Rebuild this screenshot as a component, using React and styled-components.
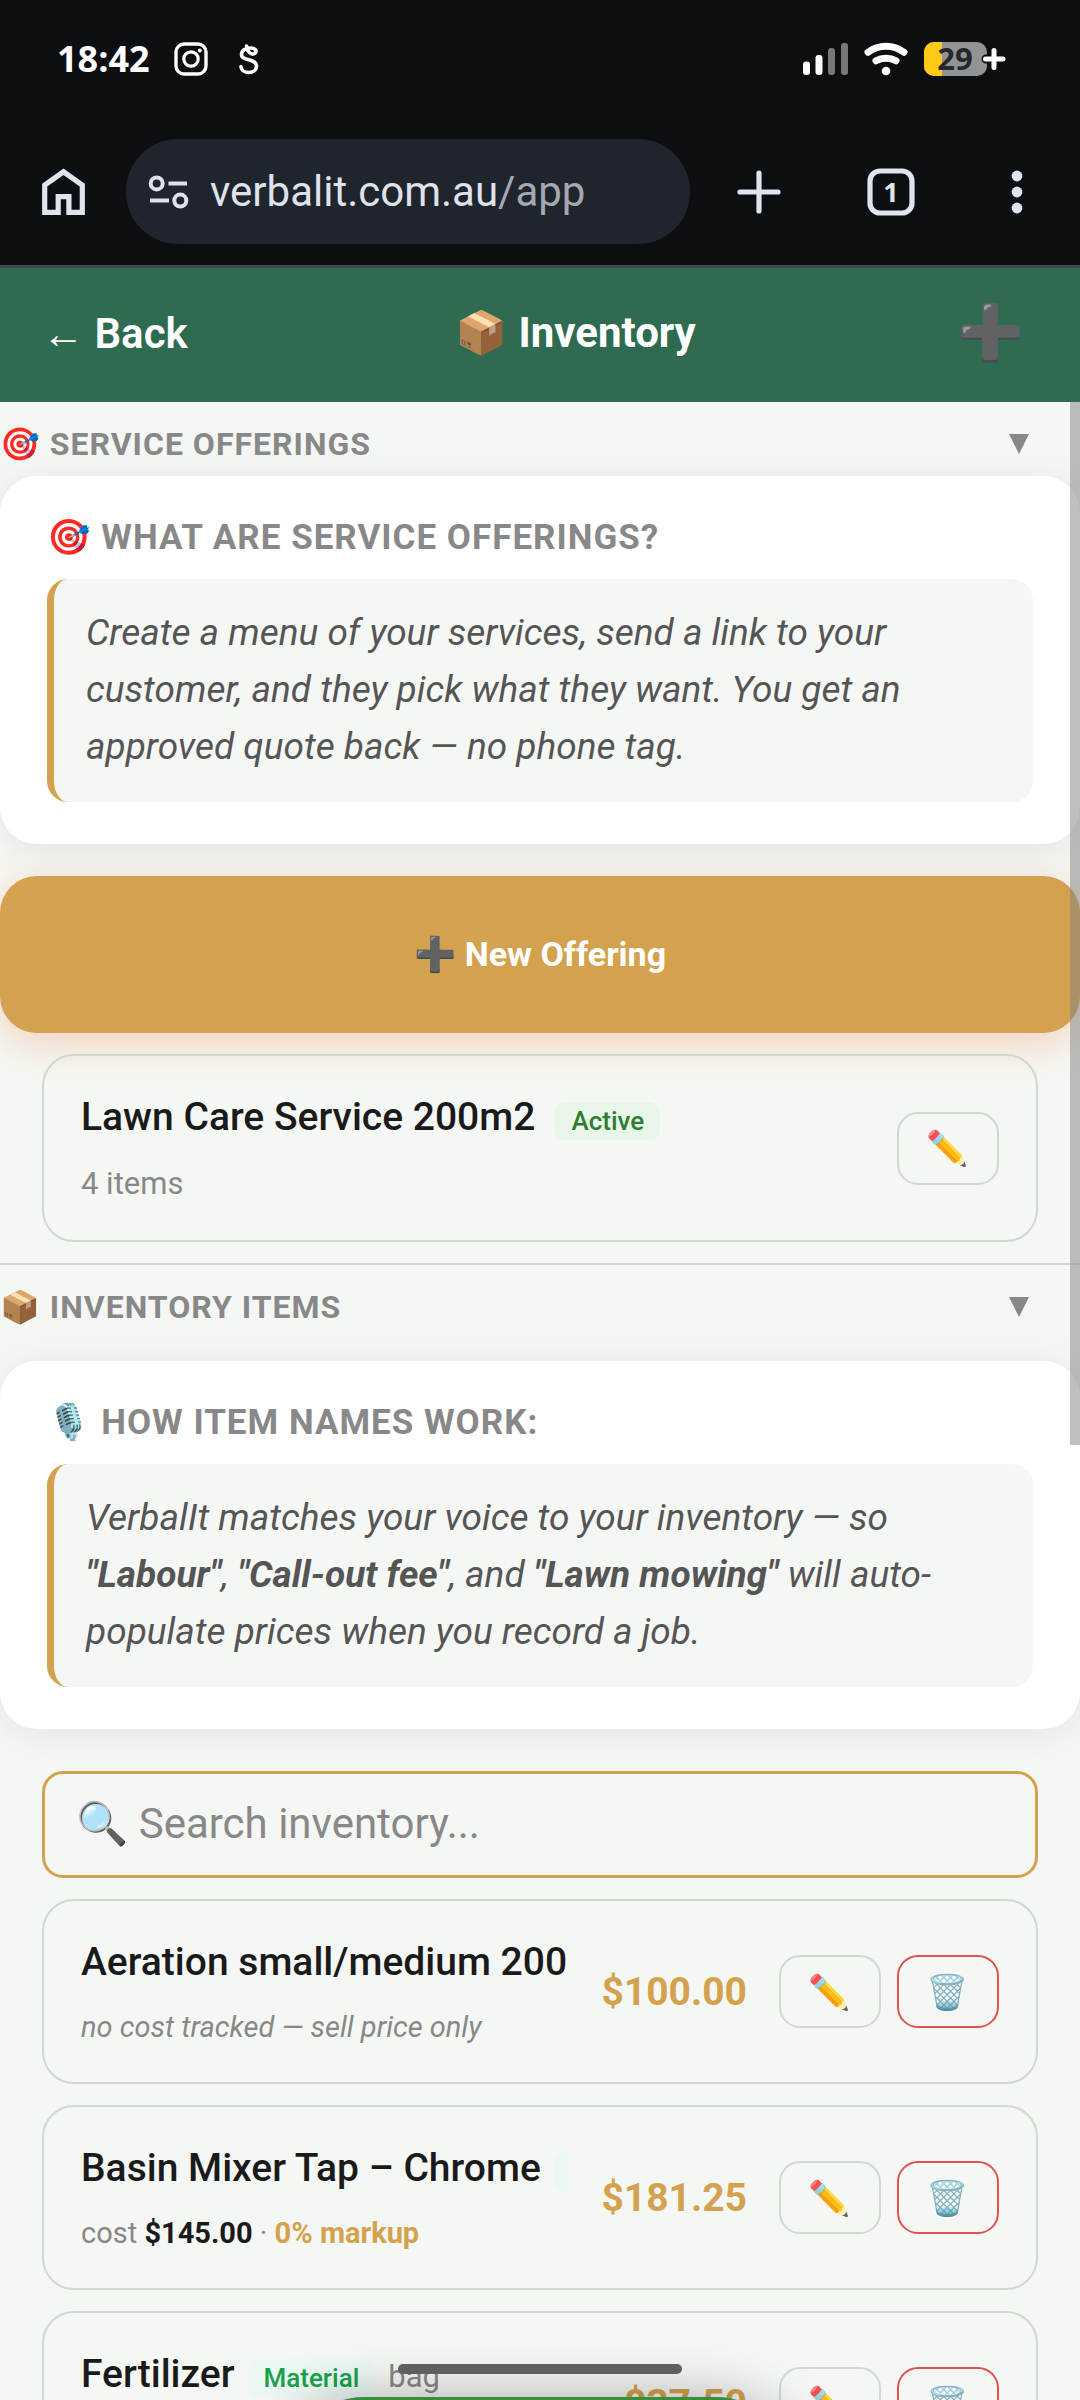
import { useState } from "react";
import styled, { createGlobalStyle, css } from "styled-components";

const GlobalStyle = createGlobalStyle`
  *, *::before, *::after {
    box-sizing: border-box;
  }
  body {
    margin: 0;
    background: #f5f7f4;
    font-family: Roboto, "Noto Color Emoji", sans-serif;
    color: #1a1a1a;
  }
  button, input {
    font-family: inherit;
  }
  button {
    cursor: pointer;
    padding: 0;
    border: 0;
    background: none;
    color: inherit;
  }
`;

const Screen = styled.div`
  position: relative;
  display: flex;
  flex-direction: column;
  height: 100vh;
  overflow: hidden;
`;

/* ---------- phone chrome ---------- */

const StatusBar = styled.div`
  display: flex;
  align-items: center;
  justify-content: space-between;
  height: 118px;
  padding: 0 74px 0 57px;
  background: #0c0e12;
  flex-shrink: 0;
`;

const StatusGroup = styled.div`
  display: flex;
  align-items: center;
  gap: ${(props) => props.$gap}px;
`;

const Clock = styled.span`
  color: #fff;
  font-family: "Open Sans", sans-serif;
  font-size: 36px;
  font-weight: 700;
  line-height: 40px;
`;

const BrowserBar = styled.div`
  display: flex;
  align-items: center;
  height: 150px;
  padding: 0 47px 0 40px;
  background: #0c0e12;
  border-bottom: 3px solid #45474d;
  flex-shrink: 0;
`;

const BrowserButton = styled.button`
  display: flex;
  align-items: center;
  justify-content: center;
  min-width: 32px;
  height: 48px;
  color: #dfe5ee;
`;

const AddressBar = styled.div`
  display: flex;
  align-items: center;
  flex: 1;
  gap: 21px;
  height: 105px;
  margin: 0 47px 0 38px;
  padding: 0 22px;
  border-radius: 52px;
  background: #20242c;
  color: #dfe2eb;
`;

const Url = styled.a`
  color: #dfe2eb;
  font-size: 42px;
  line-height: 50px;
  text-decoration: none;
  white-space: nowrap;
  span {
    color: #a5a8b1;
  }
`;

const BrowserActions = styled.div`
  display: flex;
  align-items: center;
  gap: 86px;
`;

/* ---------- app header ---------- */

const Header = styled.header`
  display: flex;
  align-items: center;
  justify-content: space-between;
  height: 134px;
  padding: 0 55px 4px 42px;
  background: #2e6b50;
  color: #fff;
  flex-shrink: 0;
`;

const BackButton = styled.button`
  padding: 2px 6px 0 0;
  color: #fff;
  font-size: 42px;
  font-weight: 600;
  line-height: 48px;
`;

const PageTitle = styled.h1`
  margin: 0;
  font-size: 42px;
  font-weight: 700;
  line-height: 48px;
`;

const AddButton = styled.button`
  font-size: 54px;
  line-height: 60px;
`;

/* ---------- content ---------- */

const Content = styled.main`
  flex: 1;
  min-height: 0;
  overflow-y: auto;
  scrollbar-width: none;
`;

const ScrollThumb = styled.div`
  position: absolute;
  top: 402px;
  right: 0;
  width: 10px;
  height: 1043px;
  background: rgba(128, 128, 128, 0.5);
  pointer-events: none;
`;

const Section = styled.section`
  & + & {
    border-top: 2px solid #cfdacf;
    margin-top: 21px;
  }
`;

const SectionToggle = styled.button`
  display: flex;
  align-items: center;
  justify-content: space-between;
  width: 100%;
  height: 74px;
  padding: 10px 51px 0 0;
  margin-bottom: ${(props) => (props.$spaced ? "22px" : "0")};
  color: #888;
  font-size: 32px;
  font-weight: 700;
  line-height: 37px;
  letter-spacing: 1px;
  text-transform: uppercase;
`;

const Card = styled.div`
  padding: 42px 47px;
  border-radius: 37px;
  background: #fff;
  box-shadow: 0 5px 42px rgba(0, 0, 0, 0.08);
`;

const CardTitle = styled.h2`
  margin: 0 0 21px;
  color: #888;
  font-size: 35px;
  font-weight: 700;
  line-height: 40px;
  letter-spacing: 1px;
  text-transform: uppercase;
`;

const Note = styled.p`
  margin: 0;
  padding: 25px 31px 27px 32px;
  border-left: 7px solid #d4a24e;
  border-radius: 21px;
  background: #f5f7f4;
  color: #555;
  font-size: 37px;
  font-style: italic;
  line-height: 57px;
`;

const NewOfferingButton = styled.button`
  display: block;
  width: 100%;
  height: 157px;
  margin: 32px 0 21px;
  padding-bottom: 2px;
  border-radius: 37px;
  background: #d4a24e;
  color: #fff;
  font-size: 34px;
  font-weight: 700;
  box-shadow: 0 10px 42px rgba(232, 122, 53, 0.3);
`;

const List = styled.ul`
  display: flex;
  flex-direction: column;
  gap: 21px;
  margin: 0;
  padding: 0 42px;
  list-style: none;
`;

const Row = styled.li`
  display: flex;
  align-items: center;
  gap: 32px;
  padding: 35px 37px;
  border: 2px solid #cfdacf;
  border-radius: 32px;
`;

const RowInfo = styled.div`
  flex: 1;
  min-width: 0;
  overflow: hidden;
`;

const RowName = styled.div`
  display: flex;
  align-items: baseline;
  gap: ${(props) => (props.$wide ? "20px" : "13px")};
  height: 52px;
  font-size: 39px;
  font-weight: 500;
  line-height: 52px;
  white-space: nowrap;
`;

const badgeColors = {
  active: css`
    background: #e8f5e9;
    color: #2e7d32;
  `,
  material: css`
    background: #ecf8f3;
    color: #16a34a;
  `,
};

const Badge = styled.span`
  padding: 4px 16px;
  border-radius: 10px;
  font-size: 26px;
  font-weight: 500;
  line-height: 30px;
  ${(props) => badgeColors[props.$kind]}
`;

const Unit = styled.span`
  color: #888;
  font-size: 31px;
  font-weight: 400;
`;

const OfferMeta = styled.div`
  margin-top: 19px;
  color: #888;
  font-size: 31px;
  line-height: 43px;
`;

const ItemMeta = styled.div`
  margin-top: 19px;
  color: #888;
  font-size: 29px;
  font-style: ${(props) => (props.$muted ? "italic" : "normal")};
  line-height: 40px;
  white-space: nowrap;
  strong {
    color: #1a1a1a;
  }
  em {
    color: #d4a24e;
    font-style: normal;
    font-weight: 700;
  }
`;

const Price = styled.span`
  color: #d4a24e;
  font-size: 39px;
  font-weight: 700;
`;

const Actions = styled.div`
  display: flex;
  gap: 16px;
`;

const IconButton = styled.button`
  width: 102px;
  height: 73px;
  border: 2px solid ${(props) => (props.$danger ? "#de5350" : "#cfdacf")};
  border-radius: 21px;
  font-size: 34px;
  line-height: 40px;
`;

const SearchBox = styled.div`
  padding: 42px 42px 21px;
`;

const SearchInput = styled.input`
  display: block;
  width: 100%;
  height: 107px;
  padding: 0 31px 2px;
  border: 3px solid #d4a24e;
  border-radius: 21px;
  background: #f5f7f4;
  color: #1a1a1a;
  font-size: 42px;
  outline: none;
  &::placeholder {
    color: #888;
    opacity: 1;
  }
`;

const RecordButton = styled.button`
  position: absolute;
  bottom: -144px;
  left: 50%;
  width: 500px;
  height: 147px;
  margin-left: -250px;
  border-radius: 74px;
  background: #388e3c;
  box-shadow: 0 10px 63px rgba(0, 0, 0, 0.4);
`;

const HomeIndicator = styled.div`
  position: absolute;
  bottom: 26px;
  left: 50%;
  width: 284px;
  height: 10px;
  margin-left: -142px;
  border-radius: 5px;
  background: #5f5f5f;
`;

/* ---------- icons ---------- */

const InstagramIcon = () => (
  <svg width="34" height="34" viewBox="0 0 34 34" fill="none" stroke="#fff">
    <rect x="2" y="2" width="30" height="30" rx="8" strokeWidth="3.4" />
    <circle cx="17" cy="17" r="7.2" strokeWidth="3.2" />
    <circle cx="25.8" cy="8.4" r="2" fill="#fff" stroke="none" />
  </svg>
);

const SquiggleIcon = () => (
  <svg width="34" height="31" viewBox="-7 0 34 31" fill="none" stroke="#fff" strokeWidth="3.6" strokeLinecap="round">
    <path d="M7.500 2C8 7.500 12 11.500 15.500 9.500C18.500 7.500 16.500 4 12 4C6 4 2.500 6.500 2.500 10.500C2.500 17.500 17.500 14 17.500 22C17.500 30.500 2.500 30.500 2 22.500" />
  </svg>
);

const SignalIcon = () => (
  <svg width="45" height="34" viewBox="0 0 45 34">
    <rect x="0" y="19.500" width="7" height="13.500" rx="3" fill="#fff" />
    <rect x="12.500" y="13" width="7" height="20" rx="3" fill="#fff" />
    <rect x="25" y="6" width="7" height="27" rx="3" fill="#77787b" />
    <rect x="38" y="1" width="7" height="32" rx="3" fill="#77787b" />
  </svg>
);

const WifiIcon = () => (
  <svg width="44" height="34" viewBox="0 0 44 34" fill="none" stroke="#fff" strokeLinecap="round">
    <path d="M4 10.200C14.500 2.300 29.500 2.300 40 10.200" strokeWidth="7" />
    <path d="M12 18.800C18 15.300 26 15.300 32 18.800" strokeWidth="7" />
    <circle cx="22" cy="29" r="4.300" fill="#fff" stroke="none" />
  </svg>
);

const BatteryIcon = () => (
  <svg width="82" height="34" viewBox="0 0 82 34">
    <defs>
      <clipPath id="cell">
        <rect width="63" height="34" rx="10" />
      </clipPath>
    </defs>
    <g clipPath="url(#cell)">
      <rect width="63" height="34" fill="#929395" />
      <rect width="18" height="34" fill="#ffc917" />
    </g>
    <text x="31" y="28" textAnchor="middle" fontFamily="Open Sans, sans-serif" fontSize="31" fontWeight="700" fill="#25272a">
      29
    </text>
    <path d="M62 17H78M70 9V25" stroke="#0c0e12" strokeWidth="9" strokeLinecap="round" />
    <path d="M61.500 17H79M70 8.500V25.500" stroke="#fff" strokeWidth="5" strokeLinecap="round" />
  </svg>
);

const HomeIcon = () => (
  <svg width="48" height="48" viewBox="0 0 48 48" fill="none" stroke="currentColor" strokeWidth="5.200">
    <path d="M4.700 44.400V17L23.500 3.800L42.300 17V44.400H28.900V28.600H18.200V44.400Z" />
  </svg>
);

const SiteInfoIcon = () => (
  <svg width="41" height="36" viewBox="0 0 41 36" fill="none" stroke="currentColor" strokeWidth="4">
    <circle cx="8.700" cy="9.400" r="6" />
    <path d="M20.500 9.400H39M2 26.600H21" />
    <circle cx="32.300" cy="26.600" r="6" />
  </svg>
);

const PlusIcon = () => (
  <svg width="44" height="44" viewBox="0 0 44 44" stroke="currentColor" strokeWidth="5.200" strokeLinecap="round">
    <path d="M3 22H41M22 3V41" />
  </svg>
);

const TabsIcon = () => (
  <svg width="48" height="48" viewBox="0 0 48 48">
    <rect x="3" y="3" width="42" height="42" rx="10" fill="none" stroke="currentColor" strokeWidth="5.200" />
    <text x="24" y="34" textAnchor="middle" fontFamily="Open Sans, sans-serif" fontSize="27" fontWeight="700" fill="currentColor">
      1
    </text>
  </svg>
);

const MenuIcon = () => (
  <svg width="12" height="44" viewBox="0 0 12 44" fill="currentColor">
    <circle cx="6" cy="6" r="5.400" />
    <circle cx="6" cy="22" r="5.400" />
    <circle cx="6" cy="38" r="5.400" />
  </svg>
);

/* flat triangle, so it keeps the same shape on every phone */
const Caret = ({ open }) => (
  <svg width="20" height="20" viewBox="0 0 20 20" fill="#888">
    <path d={open ? "M0 0H20L10 20Z" : "M0 20H20L10 0Z"} />
  </svg>
);

const items = [
  { id: 1, name: "Aeration small/medium 200m2", price: "$100.00" },
  { id: 2, name: "Basin Mixer Tap – Chrome", badge: "Material", cost: "$145.00", markup: "0% markup", price: "$181.25" },
  { id: 3, name: "Fertilizer", badge: "Material", unit: "bag", cost: "$30.00", markup: "25% markup", price: "$37.50" },
];

function InventoryRow({ item }) {
  return (
    <Row>
      <RowInfo>
        <RowName>
          <span>{item.name}</span>
          {item.badge && <Badge $kind="material">{item.badge}</Badge>}
          {item.unit && <Unit>{item.unit}</Unit>}
        </RowName>
        {item.cost ? (
          <ItemMeta>
            cost <strong>{item.cost}</strong> · <em>{item.markup}</em>
          </ItemMeta>
        ) : (
          <ItemMeta $muted>no cost tracked — sell price only</ItemMeta>
        )}
      </RowInfo>
      <Price>{item.price}</Price>
      <Actions>
        <IconButton aria-label={"Edit " + item.name}>✏️</IconButton>
        <IconButton $danger aria-label={"Delete " + item.name}>🗑️</IconButton>
      </Actions>
    </Row>
  );
}

export default function App() {
  const [offeringsOpen, setOfferingsOpen] = useState(true);
  const [itemsOpen, setItemsOpen] = useState(true);
  const [search, setSearch] = useState("");
  const visible = items.filter((item) => item.name.toLowerCase().includes(search.toLowerCase()));

  return (
    <Screen>
      <GlobalStyle />
      <StatusBar>
        <StatusGroup $gap={24}>
          <Clock>18:42</Clock>
          <InstagramIcon />
          <SquiggleIcon />
        </StatusGroup>
        <StatusGroup $gap={16}>
          <SignalIcon />
          <WifiIcon />
          <BatteryIcon />
        </StatusGroup>
      </StatusBar>
      <BrowserBar>
        <BrowserButton aria-label="Home"><HomeIcon /></BrowserButton>
        <AddressBar>
          <SiteInfoIcon />
          <Url href="#app">verbalit.com.au<span>/app</span></Url>
        </AddressBar>
        <BrowserActions>
          <BrowserButton aria-label="New tab"><PlusIcon /></BrowserButton>
          <BrowserButton aria-label="Tabs"><TabsIcon /></BrowserButton>
          <BrowserButton aria-label="Menu"><MenuIcon /></BrowserButton>
        </BrowserActions>
      </BrowserBar>

      <Header>
        <BackButton>← Back</BackButton>
        <PageTitle>📦 Inventory</PageTitle>
        <AddButton aria-label="Add item">➕</AddButton>
      </Header>

      <Content>
        <Section>
          <SectionToggle aria-expanded={offeringsOpen} onClick={() => setOfferingsOpen(!offeringsOpen)}>
            <span>🎯 Service Offerings</span>
            <Caret open={offeringsOpen} />
          </SectionToggle>
          {offeringsOpen && (
            <>
              <Card>
                <CardTitle>🎯 What are service offerings?</CardTitle>
                <Note>
                  Create a menu of your services, send a link to your customer, and they pick what they want. You get an
                  approved quote back — no phone tag.
                </Note>
              </Card>
              <NewOfferingButton>➕ New Offering</NewOfferingButton>
              <List>
                <Row>
                  <RowInfo>
                    <RowName $wide>
                      <span>Lawn Care Service 200m2</span>
                      <Badge $kind="active">Active</Badge>
                    </RowName>
                    <OfferMeta>4 items</OfferMeta>
                  </RowInfo>
                  <Actions>
                    <IconButton aria-label="Edit Lawn Care Service 200m2">✏️</IconButton>
                  </Actions>
                </Row>
              </List>
            </>
          )}
        </Section>

        <Section>
          <SectionToggle $spaced aria-expanded={itemsOpen} onClick={() => setItemsOpen(!itemsOpen)}>
            <span>📦 Inventory Items</span>
            <Caret open={itemsOpen} />
          </SectionToggle>
          {itemsOpen && (
            <>
              <Card>
                <CardTitle>🎙️ How item names work:</CardTitle>
                <Note>
                  VerbalIt matches your voice to your inventory — so <strong>"Labour"</strong>,{" "}
                  <strong>"Call-out fee"</strong>, and <strong>"Lawn mowing"</strong> will auto-populate prices when you
                  record a job.
                </Note>
              </Card>
              <SearchBox>
                <SearchInput
                  type="text"
                  aria-label="Search inventory"
                  placeholder="🔍 Search inventory..."
                  value={search}
                  onChange={(e) => setSearch(e.target.value)}
                />
              </SearchBox>
              <List>
                {visible.map((item) => (
                  <InventoryRow key={item.id} item={item} />
                ))}
              </List>
            </>
          )}
        </Section>
      </Content>

      <ScrollThumb />
      <RecordButton aria-label="Record" />
      <HomeIndicator />
    </Screen>
  );
}
